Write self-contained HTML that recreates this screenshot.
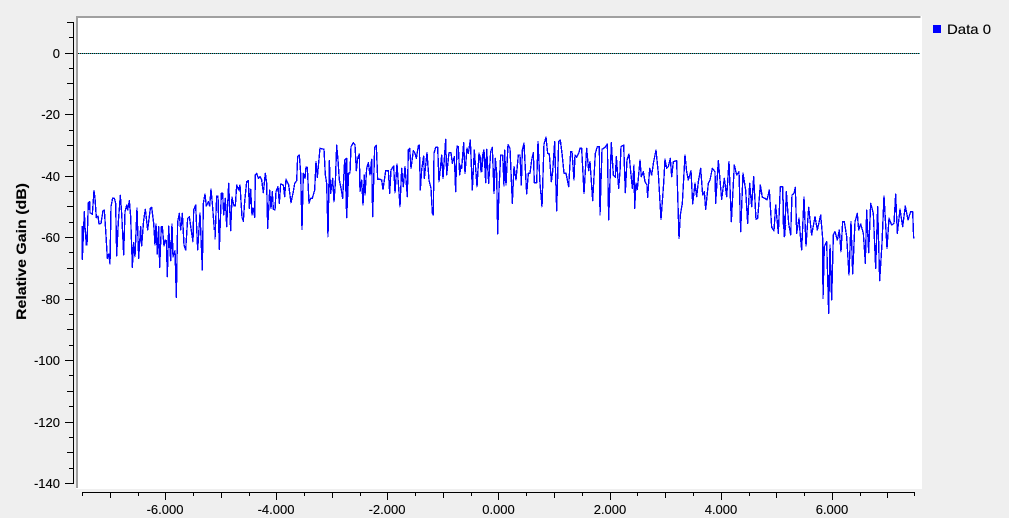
<!DOCTYPE html>
<html><head><meta charset="utf-8"><style>
html,body{margin:0;padding:0;background:#efefef;width:1009px;height:518px;overflow:hidden}
svg{display:block;position:absolute;left:0;top:0}
text{font-family:"Liberation Sans",sans-serif;font-size:13px;fill:#000;stroke:#000;stroke-width:.12px}
</style></head><body>
<svg width="1009" height="518" viewBox="0 0 1009 518">
<rect width="1009" height="518" fill="#efefef"/>
<rect x="76" y="16" width="846" height="473" fill="#fff"/>
<rect x="76" y="16" width="844.500" height="2" fill="#a0a0a0"/>
<rect x="76" y="16" width="2" height="472" fill="#a0a0a0"/>
<line x1="78" y1="53.500" x2="920" y2="53.500" stroke="#19b5b5" stroke-width="1" shape-rendering="crispEdges"/>
<line x1="78" y1="53.500" x2="920" y2="53.500" stroke="#300" stroke-width="1" stroke-dasharray="1 1" shape-rendering="crispEdges"/>
<g fill="none" stroke="#0000ff" stroke-width="4" stroke-linejoin="round" shape-rendering="crispEdges">
<polyline transform="translate(75,180) scale(.33333)" points="22,138 22,238 28,95 30,140 34,195 36,195 40,68 44,65 45,98 52,103 57,32 60,55 64,113 69,108 72,132 78,130 84,92 88,90 92,150 97,235 101,222 105,252 108,80 113,54 118,55 122,70 125,228 130,125 136,46 140,100 146,225 150,95 155,75 158,90 163,62 167,110 172,262 176,188 180,230 186,85 191,235 197,140 200,198 206,120 211,88 218,150 226,85 230,82 236,130 240,195 243,132 247,222 251,140 254,262 259,140 262,140 267,198 270,180 274,182 277,290 281,138 287,242 291,132 294,230 300,212 304,352 308,125 313,100 317,150 322,100 327,195 332,210 338,115 343,110 350,160 354,185 356,90 362,75 368,210 375,100 382,270 385,70 390,42 394,78 400,65 404,78 408,28 412,70 418,150"/>
<polyline transform="translate(210,140) scale(.33333)" points="15,298 20,168 24,168 28,328 34,160 38,160 41,225 46,175 50,260 56,130 62,272 66,172 72,198 76,198 80,135 86,150 90,135 96,232 100,244 104,185 110,125 115,122 118,205 122,148 126,225 130,205 134,232 136,105 140,100 145,115 150,110 155,120 160,158 166,100 170,130 173,265 179,150 183,205 187,155 190,208 195,210 198,155 204,140 208,190 212,132 220,135 224,170 228,118 236,135 243,188 250,155 254,130 260,122 263,50 268,45 272,100 276,268 280,100 285,115 288,82 292,82 297,190 302,175 307,175 314,150 318,65 322,112 330,25 342,28 346,105 350,130 354,290 358,62 362,160 368,115 372,185 376,130 380,15 384,60 388,120 394,150 398,175 404,60 410,55 410,232 416,100"/>
<polyline transform="translate(345,130) scale(.33333)" points="0,88 5,263 10,130 15,128 18,50 25,38 30,45 34,122 38,85 43,72 45,185 50,150 54,225 58,135 60,195 65,115 70,98 75,135 80,88 83,260 89,52 94,46 98,148 105,148 110,150 114,178 122,122 130,122 134,190 138,120 146,108 150,188 156,102 160,160 165,230 170,115 175,170 180,110 187,200 190,60 194,55 198,115 205,62 210,70 214,85 220,48 223,45 226,180 230,120 236,78 238,145 246,68 252,150 258,175 262,250 265,255 267,70 272,52 278,52 282,155 290,75 294,145 302,28 305,135 312,68 318,68 322,100 328,80 332,185 336,48 340,50 344,135 348,105 350,115 356,38 360,130 366,55 370,70 376,30 382,180 388,60 396,170 402,70 410,125 416,60 420,100"/>
<polyline transform="translate(480,130) scale(.33333)" points="0,75 3,125 8,75 12,60 17,158 20,58 26,160 32,65 37,52 42,190 46,85 50,130 53,312 57,180 62,75 68,75 72,168 74,60 78,165 84,44 90,55 97,220 102,110 108,150 115,75 120,75 124,165 127,60 132,40 140,192 145,130 150,130 155,90 160,68 163,158 170,158 174,35 180,160 186,230 192,42 198,22 203,70 208,72 214,155 218,125 224,35 230,243 236,35 241,30 246,70 252,130 258,130 266,170 272,65 276,65 282,150 285,75 290,82 296,70 300,55 305,55 312,190 320,55 326,122 330,95 338,212 346,70 352,50 358,50 360,255 366,58 375,52 382,42 386,270 394,38 400,135 406,142 409,80 416,175 420,125"/>
<polyline transform="translate(615,140) scale(.33333)" points="15,95 18,20 26,15 31,158 36,60 42,42 52,145 57,75 59,205 63,130 67,148 75,60 79,110 85,95 90,125 96,135 98,172 104,85 110,105 116,65 123,30 130,100 138,238 146,130 150,58 155,85 160,80 166,55 170,110 175,65 185,62 192,295 196,225 202,190 210,45 215,95 220,120 228,92 233,192 240,130 245,170 250,125 257,85 263,165 268,155 272,208 280,130 285,120 292,85 300,95 302,190 310,62 320,178 328,115 335,170 342,65 349,245 358,75 365,105 372,95 377,275 384,100 392,150 398,250 404,130 410,200 416,110 423,238 428,235 436,135 442,172 450,175 456,180 463,150 470,262 477,272 482,195 490,280 496,140 503,140 508,290 512,255"/>
<polyline transform="translate(780,180) scale(.33333)" points="0,20 8,20 10,130 14,168 19,35 26,130 32,165 36,45 42,40 46,22 50,160 57,115 60,155 65,210 72,52 78,198 86,82 95,165 105,110 112,150 122,105 128,175 129,355 133,200 140,185 146,400 150,195 155,360 160,165 165,155 172,180 178,150 183,215 188,125 193,125 200,170 207,285 213,125 218,282 225,125 232,100 236,150 242,132 250,160 256,250 260,90 266,218 272,70 280,100 287,265 293,80 299,302 306,190 312,48 321,205 327,115 335,135 342,130 347,42 352,160 360,88 368,140 376,78 384,120 392,95 398,95 401,175"/>
</g>
<g stroke="#000" stroke-width="1" shape-rendering="crispEdges">
<line x1="73.500" y1="22" x2="73.500" y2="484"/>
<path d="M67 22.500H73M69 37.500H73M65 53.500H73M69 68.500H73M67 83.500H73M69 99.500H73M65 114.500H73M69 130.500H73M67 145.500H73M69 160.500H73M65 176.500H73M69 191.500H73M67 206.500H73M69 222.500H73M65 237.500H73M69 252.500H73M67 268.500H73M69 283.500H73M65 299.500H73M69 314.500H73M67 329.500H73M69 345.500H73M65 360.500H73M69 375.500H73M67 391.500H73M69 406.500H73M65 422.500H73M69 437.500H73M67 452.500H73M69 468.500H73M65 483.500H73"/>
<line x1="82" y1="492.500" x2="915" y2="492.500"/>
<path d="M82.500 492V496M110.500 492V498M138.500 492V496M165.500 492V500M193.500 492V496M221.500 492V498M249.500 492V496M276.500 492V500M304.500 492V496M332.500 492V498M360.500 492V496M387.500 492V500M415.500 492V496M443.500 492V498M471.500 492V496M498.500 492V500M526.500 492V496M554.500 492V498M582.500 492V496M610.500 492V500M637.500 492V496M665.500 492V498M693.500 492V496M721.500 492V500M749.500 492V496M776.500 492V498M804.500 492V496M832.500 492V500M860.500 492V496M887.500 492V498M914.500 492V496"/>
</g>
<g text-anchor="end">
<text x="60" y="58">0</text><text x="60" y="119">-20</text><text x="60" y="181">-40</text><text x="60" y="242">-60</text><text x="60" y="304">-80</text><text x="60" y="365">-100</text><text x="60" y="427">-120</text><text x="60" y="488">-140</text>
</g>
<g text-anchor="middle">
<text x="165" y="514">-6.000</text><text x="276" y="514">-4.000</text><text x="387" y="514">-2.000</text><text x="498.500" y="514">0.000</text><text x="610" y="514">2.000</text><text x="721" y="514">4.000</text><text x="832" y="514">6.000</text>
</g>
<text transform="translate(26,320) rotate(-90)" style="font-weight:bold;font-size:14px" textLength="137" lengthAdjust="spacingAndGlyphs">Relative Gain (dB)</text>
<rect x="933" y="25" width="8" height="8" fill="#0000ff"/>
<text x="947" y="34" style="font-size:14px" textLength="44" lengthAdjust="spacingAndGlyphs">Data 0</text>
</svg>
</body></html>
